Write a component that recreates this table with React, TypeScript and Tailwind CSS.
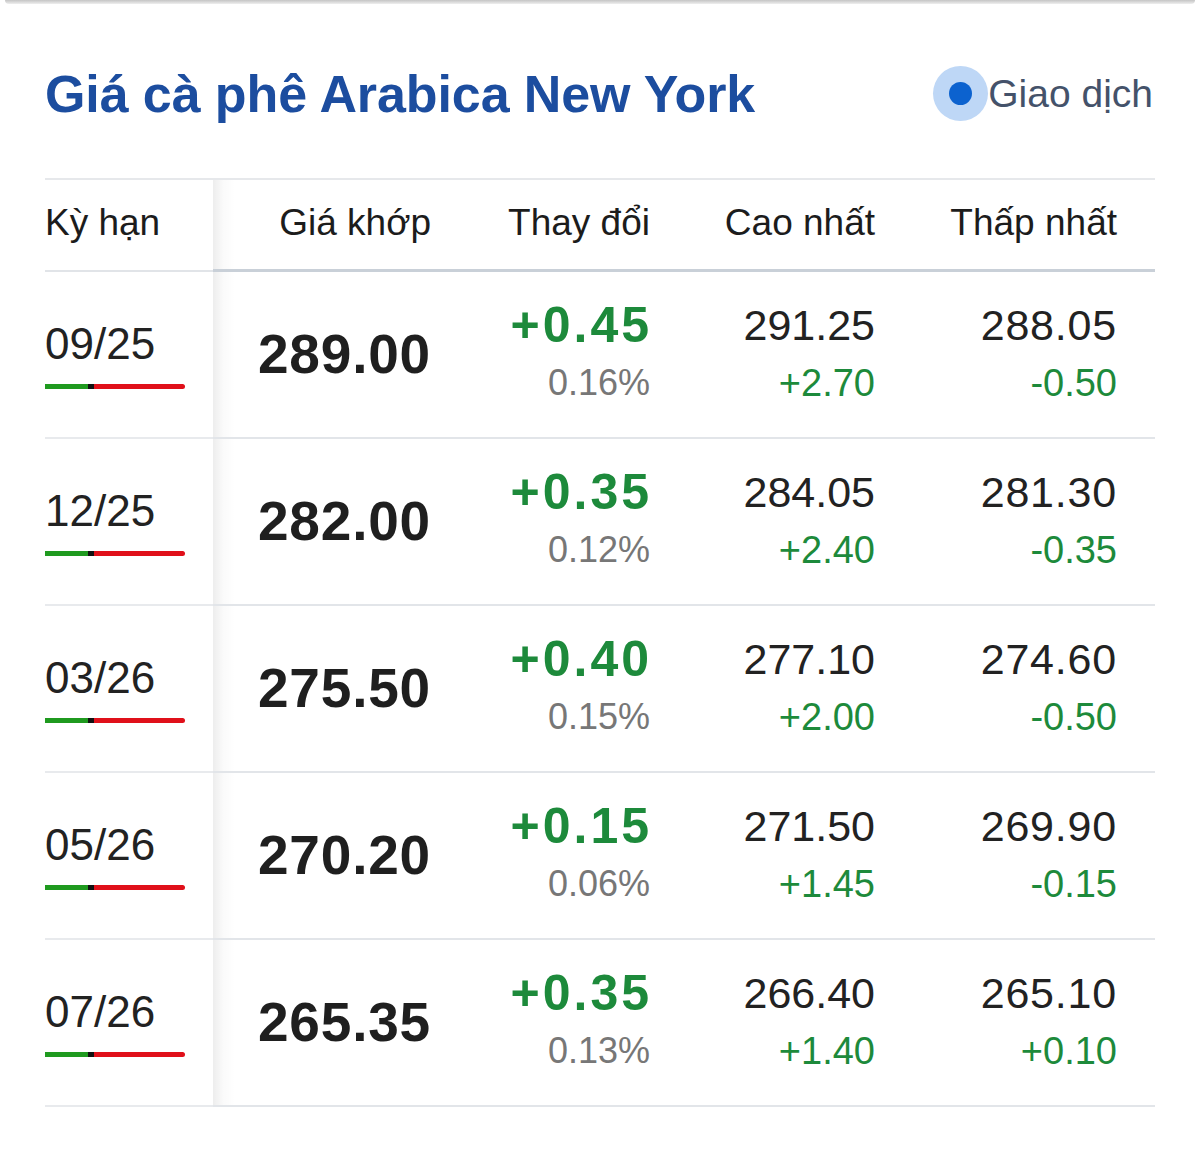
import React from "react";

const rows = [
  { term: "09/25", price: "289.00", chg: "+0.45", pct: "0.16%", hi: "291.25", hiC: "+2.70", lo: "288.05", loC: "-0.50" },
  { term: "12/25", price: "282.00", chg: "+0.35", pct: "0.12%", hi: "284.05", hiC: "+2.40", lo: "281.30", loC: "-0.35" },
  { term: "03/26", price: "275.50", chg: "+0.40", pct: "0.15%", hi: "277.10", hiC: "+2.00", lo: "274.60", loC: "-0.50" },
  { term: "05/26", price: "270.20", chg: "+0.15", pct: "0.06%", hi: "271.50", hiC: "+1.45", lo: "269.90", loC: "-0.15" },
  { term: "07/26", price: "265.35", chg: "+0.35", pct: "0.13%", hi: "266.40", hiC: "+1.40", lo: "265.10", loC: "+0.10" },
];

const shade = "bg-[linear-gradient(to_right,rgba(0,0,0,0.07),rgba(0,0,0,0.02)_10px,rgba(255,255,255,0)_22px)]";

export default function App() {
  return (
    <div className="w-[1200px] h-[1150px] bg-white overflow-hidden" style={{ fontFamily: '"Liberation Sans", Arial, sans-serif' }}>
      <div className="mx-[5px] h-[4px] rounded-b-full bg-gradient-to-b from-[#c4c4c4] to-[#efefef]" />
      <div className="h-[174px] pt-[5px] pl-[45px] pr-[47px] flex items-center justify-between">
        <h1 className="text-[52px] font-bold text-[#1c4d9f] leading-none tracking-[-0.1px]">Giá cà phê Arabica New York</h1>
        <div className="flex items-center">
          <div className="w-[55px] h-[55px] rounded-full bg-[#bed7f6] flex items-center justify-center">
            <div className="w-[23px] h-[23px] rounded-full bg-[#0c62cf]" />
          </div>
          <span className="text-[39px] text-[#44526a] leading-none">Giao dịch</span>
        </div>
      </div>
      <div className="ml-[45px] w-[1110px] border-t-2 border-[#e6e8eb]">
        <div className="flex h-[92px] text-[37px] text-[#1c1c1c]">
          <div className="w-[168px] shrink-0 flex items-center pb-[4px] border-b-2 border-[#e1e4e8] self-stretch">
            <span>Kỳ hạn</span>
          </div>
          <div className="flex flex-1 border-b-[3px] border-[#c9d0d8]">
            <div className={`w-[242px] flex items-center justify-end pr-[24px] pb-[3px] ${shade}`}>Giá khớp</div>
            <div className="w-[219px] flex items-center justify-end pr-[24px] pb-[3px]">Thay đổi</div>
            <div className="w-[225px] flex items-center justify-end pr-[24px] pb-[3px]">Cao nhất</div>
            <div className="w-[256px] flex items-center justify-end pr-[38px] pb-[3px]">Thấp nhất</div>
          </div>
        </div>
        {rows.map((r) => (
          <div key={r.term} className="flex h-[167px]">
            <div className="w-[168px] shrink-0 border-b-2 border-[#e8eaed] flex flex-col justify-center pb-[2px]">
              <div className="text-[44px] leading-[50px] text-[#222]">{r.term}</div>
              <div className="flex h-[5px] w-[140px] mt-[15px]">
                <div className="w-[43px] bg-[#1f9a1f]" />
                <div className="w-[6px] bg-[#111]" />
                <div className="flex-1 bg-[#e0101a] rounded-r-full" />
              </div>
            </div>
            <div className="flex flex-1 border-b-2 border-[#e2e5e9]">
              <div className={`w-[242px] flex items-center justify-end pr-[24px] ${shade}`}>
                <span className="text-[55px] font-bold text-[#1f1f1f] tracking-[0.8px] leading-none">{r.price}</span>
              </div>
              <div className="w-[219px] flex flex-col justify-center items-end pr-[22px] pb-[2px]">
                <span className="text-[50px] font-bold text-[#1d8a3b] tracking-[3px] leading-[58px]">{r.chg}</span>
                <span className="text-[36px] text-[#777] leading-[58px] pr-[2px]">{r.pct}</span>
              </div>
              <div className="w-[225px] flex flex-col justify-center items-end pr-[24px] pb-[2px]">
                <span className="text-[43px] text-[#222] leading-[58px]">{r.hi}</span>
                <span className="text-[38px] text-[#1d8a3b] leading-[58px]">{r.hiC}</span>
              </div>
              <div className="w-[256px] flex flex-col justify-center items-end pr-[38px] pb-[2px]">
                <span className="text-[43px] text-[#222] leading-[58px] tracking-[0.8px]">{r.lo}</span>
                <span className="text-[38px] text-[#1d8a3b] leading-[58px]">{r.loC}</span>
              </div>
            </div>
          </div>
        ))}
      </div>
    </div>
  );
}
